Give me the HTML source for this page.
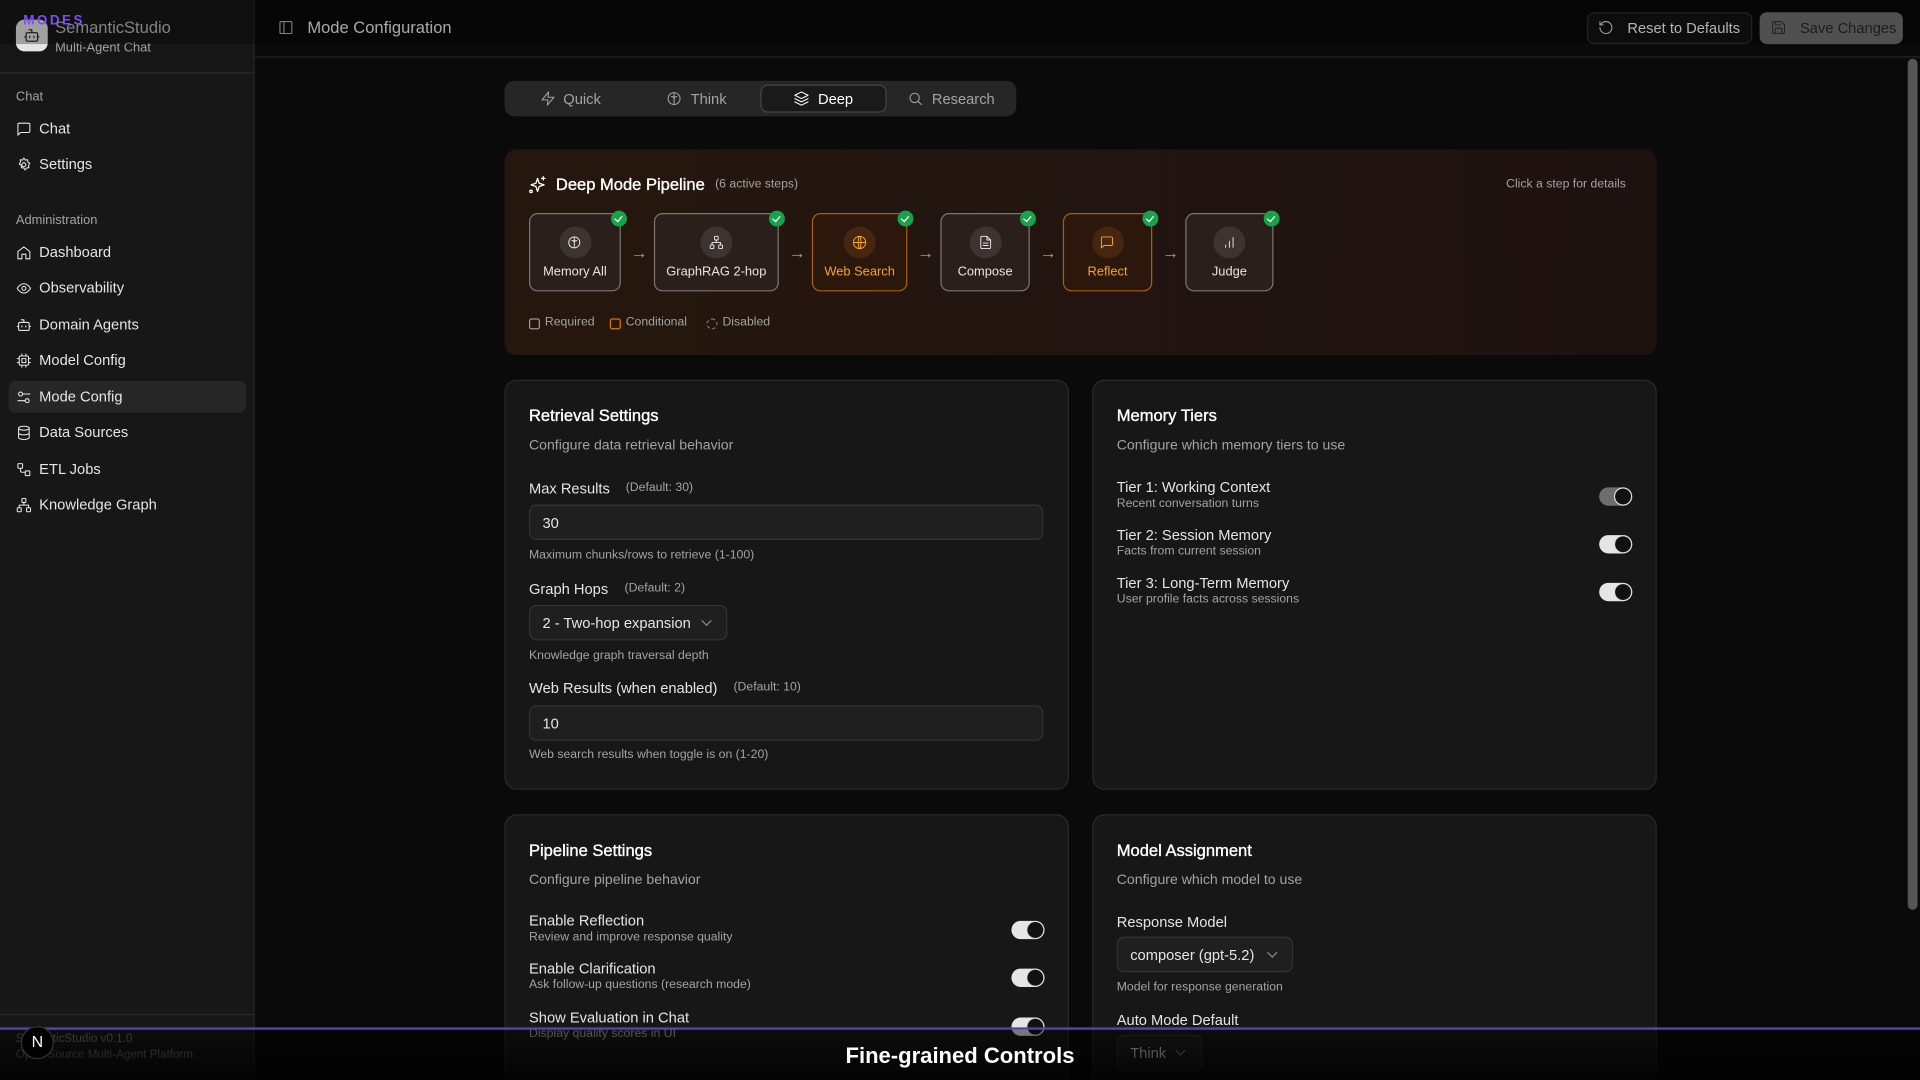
<!DOCTYPE html>
<html><head><meta charset="utf-8">
<style>
*{box-sizing:border-box;margin:0;padding:0}
html,body{width:1920px;height:1080px;overflow:hidden;background:#0a0a0a}
body{font-family:"Liberation Sans",Arial,sans-serif;color:#e5e5e5}
#w{position:absolute;left:0;top:0;width:1568px;height:882px;transform:scale(1.22449);transform-origin:0 0;background:#0a0a0a;overflow:hidden}
.a{position:absolute;white-space:nowrap;line-height:16px}
.box{position:absolute}
svg{position:absolute;fill:none;stroke:currentColor;stroke-width:1.6;stroke-linecap:round;stroke-linejoin:round}
.nav{font-size:12px;color:#e5e5e5}
.muted{color:#a3a3a3}
.card{position:absolute;background:#171717;border:1px solid #2a2a2a;border-radius:10px}
.inp{position:absolute;background:#1f1f1f;border:1px solid #333;border-radius:6px}
.tg{position:absolute;width:27px;height:15px;border-radius:8px;background:#e5e5e5}
.tg::after{content:"";position:absolute;right:1px;top:1px;width:13px;height:13px;border-radius:50%;background:#111;box-shadow:0 0 0 1px #ddd}
.step{position:absolute;top:174px;height:64px;border:1.5px solid #7a7574;border-radius:7px;background:#2b1f1c}
.step.o{border-color:#a85f0c;background:#2b170b}
.step .ic{position:absolute;left:50%;top:10px;width:26px;height:26px;margin-left:-13px;border-radius:50%;background:#3d3331}
.step.o .ic{background:#46260f}
.step .lb{position:absolute;left:0;right:0;top:39px;text-align:center;font-size:10.5px;color:#e5e5e5;line-height:16px}
.step.o .lb{color:#f5a524}
.chk{position:absolute;right:-6px;top:-3px;width:13px;height:13px;border-radius:50%;background:#16a34a}
.chk::after{content:"";position:absolute;left:4px;top:2.5px;width:3px;height:5px;border:solid #fff;border-width:0 1.3px 1.3px 0;transform:rotate(40deg)}
.arr{position:absolute;top:198px;font-size:14px;color:#9a9a9a}
.sel{position:absolute;width:6px;height:6px;border:solid #888;border-width:0 1px 1px 0;transform:rotate(45deg)}
</style></head><body><div id="w">

<!-- sidebar -->
<div class="box" style="left:0;top:0;width:208px;height:882px;background:#171717;border-right:1px solid #262626"></div>
<div class="box" style="left:0;top:59px;width:208px;height:1px;background:#2a2a2a"></div>
<div class="box" style="left:13px;top:16px;width:26px;height:26px;border-radius:7px;background:#e5e5e5"></div>
<svg style="left:19px;top:22px;color:#222" width="14" height="14" viewBox="0 0 24 24"><path d="M12 8V4H8"/><rect x="4" y="8" width="16" height="12" rx="2"/><path d="M2 14h2M20 14h2M15 13v2M9 13v2"/></svg>
<div class="a" style="left:45px;top:15px;font-size:13.5px;color:#bdbdbd">SemanticStudio</div>
<div class="a" style="left:45px;top:31px;font-size:10.5px;color:#a3a3a3">Multi-Agent Chat</div>

<div class="a muted" style="left:13px;top:71px;font-size:10.5px">Chat</div>
<svg style="left:13px;top:99px" width="13" height="13" viewBox="0 0 24 24"><path d="M21 15a2 2 0 0 1-2 2H7l-4 4V5a2 2 0 0 1 2-2h14a2 2 0 0 1 2 2z"/></svg>
<div class="a nav" style="left:32px;top:97px">Chat</div>
<svg style="left:13px;top:128px" width="13" height="13" viewBox="0 0 24 24"><circle cx="12" cy="12" r="3"/><path d="M12 2l2 3 3.5-.5.5 3.5 3 2-2 3 .5 3.5-3.5.5-2 3-2-3-3.5-.5-.5-3.5-3-2 2-3L6.5 4.5 10 5z"/></svg>
<div class="a nav" style="left:32px;top:126px">Settings</div>

<div class="a muted" style="left:13px;top:172px;font-size:10.5px">Administration</div>
<div class="box" style="left:7px;top:311px;width:194px;height:26px;border-radius:6px;background:#262626"></div>
<svg style="left:13px;top:200px" width="13" height="13" viewBox="0 0 24 24"><path d="M3 10l9-7 9 7v11h-6v-7H9v7H3z"/></svg>
<div class="a nav" style="left:32px;top:198px">Dashboard</div>
<svg style="left:13px;top:229px" width="13" height="13" viewBox="0 0 24 24"><path d="M2 12s4-7 10-7 10 7 10 7-4 7-10 7S2 12 2 12z"/><circle cx="12" cy="12" r="3"/></svg>
<div class="a nav" style="left:32px;top:227px">Observability</div>
<svg style="left:13px;top:259px" width="13" height="13" viewBox="0 0 24 24"><path d="M12 8V4H8"/><rect x="4" y="8" width="16" height="12" rx="2"/><path d="M2 14h2M20 14h2M15 13v2M9 13v2"/></svg>
<div class="a nav" style="left:32px;top:257px">Domain Agents</div>
<svg style="left:13px;top:288px" width="13" height="13" viewBox="0 0 24 24"><rect x="5" y="5" width="14" height="14" rx="2"/><rect x="9" y="9" width="6" height="6"/><path d="M9 2v3M15 2v3M9 19v3M15 19v3M2 9h3M2 15h3M19 9h3M19 15h3"/></svg>
<div class="a nav" style="left:32px;top:286px">Model Config</div>
<svg style="left:13px;top:318px" width="13" height="13" viewBox="0 0 24 24"><circle cx="7" cy="7" r="3"/><path d="M10 7h11M3 17h11"/><circle cx="17" cy="17" r="3"/></svg>
<div class="a nav" style="left:32px;top:316px">Mode Config</div>
<svg style="left:13px;top:347px" width="13" height="13" viewBox="0 0 24 24"><ellipse cx="12" cy="5" rx="8" ry="3"/><path d="M4 5v14c0 1.7 3.6 3 8 3s8-1.3 8-3V5M4 12c0 1.7 3.6 3 8 3s8-1.3 8-3"/></svg>
<div class="a nav" style="left:32px;top:345px">Data Sources</div>
<svg style="left:13px;top:377px" width="13" height="13" viewBox="0 0 24 24"><rect x="3" y="3" width="7" height="7" rx="1"/><rect x="14" y="14" width="7" height="7" rx="1"/><path d="M7 10v4a2 2 0 0 0 2 2h5"/></svg>
<div class="a nav" style="left:32px;top:375px">ETL Jobs</div>
<svg style="left:13px;top:406px" width="13" height="13" viewBox="0 0 24 24"><rect x="9" y="2" width="6" height="6" rx="1"/><rect x="2" y="16" width="6" height="6" rx="1"/><rect x="16" y="16" width="6" height="6" rx="1"/><path d="M12 8v4M5 16v-4h14v4"/></svg>
<div class="a nav" style="left:32px;top:404px">Knowledge Graph</div>

<div class="box" style="left:0;top:828px;width:208px;height:1px;background:#2a2a2a"></div>
<div class="a" style="left:13px;top:841px;font-size:9.5px;color:#737373">SemanticStudio v0.1.0</div>
<div class="a" style="left:13px;top:854px;font-size:9.5px;color:#737373">Open Source Multi-Agent Platform</div>

<!-- header -->
<div class="box" style="left:208px;top:46px;width:1360px;height:1px;background:#262626"></div>
<svg style="left:227px;top:16px;color:#bbb" width="13" height="13" viewBox="0 0 24 24"><rect x="3" y="3" width="18" height="18" rx="2"/><path d="M9 3v18"/></svg>
<div class="a" style="left:251px;top:15px;font-size:13.5px;color:#f0f0f0">Mode Configuration</div>
<div class="box" style="left:1296px;top:10px;width:135px;height:26px;border:1px solid #333;border-radius:6px;background:#141414"></div>
<svg style="left:1305px;top:16px" width="13" height="13" viewBox="0 0 24 24"><path d="M3 12a9 9 0 1 0 3-6.7L3 8"/><path d="M3 3v5h5"/></svg>
<div class="a" style="left:1329px;top:15px;font-size:12px;color:#fff">Reset to Defaults</div>
<div class="box" style="left:1437px;top:10px;width:117px;height:26px;border-radius:6px;background:#737373"></div>
<svg style="left:1446px;top:16px;color:#333" width="13" height="13" viewBox="0 0 24 24"><path d="M19 21H5a2 2 0 0 1-2-2V5a2 2 0 0 1 2-2h11l5 5v11a2 2 0 0 1-2 2z"/><path d="M17 21v-8H7v8M7 3v5h8"/></svg>
<div class="a" style="left:1470px;top:15px;font-size:12px;color:#2a2a2a">Save Changes</div>

<!-- top overlay -->
<div class="box" style="left:0;top:0;width:1568px;height:36px;background:rgba(0,0,0,0.3)"></div>
<div class="a" style="left:19px;top:9px;font-size:11px;font-weight:bold;letter-spacing:2px;color:#7c4dff">MODES</div>

<!-- scrollbar -->
<div class="box" style="left:1558px;top:48px;width:8px;height:695px;border-radius:4px;background:#555"></div>

<!-- tabs -->
<div class="box" style="left:412px;top:66px;width:418px;height:29px;border-radius:8px;background:#262626"></div>
<div class="box" style="left:621px;top:69px;width:103px;height:23px;border-radius:6px;background:#1a1a1a;border:1px solid #444"></div>
<svg style="left:441px;top:74px;color:#a3a3a3" width="13" height="13" viewBox="0 0 24 24"><path d="M13 2L3 14h9l-1 8 10-12h-9z"/></svg>
<div class="a muted" style="left:460px;top:73px;font-size:12px">Quick</div>
<svg style="left:544px;top:74px;color:#a3a3a3" width="13" height="13" viewBox="0 0 24 24"><circle cx="12" cy="12" r="9"/><path d="M12 4v16M8 9c2 0 4 1 4 3M16 9c-2 0-4 1-4 3"/></svg>
<div class="a muted" style="left:564px;top:73px;font-size:12px">Think</div>
<svg style="left:648px;top:74px;color:#fff" width="13" height="13" viewBox="0 0 24 24"><path d="M12 2l10 5-10 5L2 7z"/><path d="M2 12l10 5 10-5M2 17l10 5 10-5"/></svg>
<div class="a" style="left:668px;top:73px;font-size:12px;color:#fff">Deep</div>
<svg style="left:741px;top:74px;color:#a3a3a3" width="13" height="13" viewBox="0 0 24 24"><circle cx="11" cy="11" r="7"/><path d="M21 21l-5-5"/></svg>
<div class="a muted" style="left:761px;top:73px;font-size:12px">Research</div>

<!-- pipeline -->
<div class="box" style="left:412px;top:122px;width:941px;height:168px;border-radius:10px;background:linear-gradient(90deg,#26170e,#1e1211)"></div>
<svg style="left:431px;top:143px;color:#fff" width="16" height="16" viewBox="0 0 24 24"><path d="M12 4l2 6 6 2-6 2-2 6-2-6-6-2 6-2z"/><path d="M19 2v4M17 4h4"/><circle cx="4" cy="20" r="1.5"/></svg>
<div class="a" style="left:454px;top:143px;font-size:13.5px;color:#fff;-webkit-text-stroke:0.3px #fff">Deep Mode Pipeline</div>
<div class="a muted" style="left:584px;top:143px;font-size:10px">(6 active steps)</div>
<div class="a muted" style="left:1230px;top:143px;font-size:10px">Click a step for details</div>

<div class="step" style="left:432px;width:75px"><div class="ic"></div><div class="lb">Memory All</div><div class="chk"></div></div>
<div class="arr" style="left:515px">→</div>
<div class="step" style="left:534px;width:102px"><div class="ic"></div><div class="lb">GraphRAG 2-hop</div><div class="chk"></div></div>
<div class="arr" style="left:644px">→</div>
<div class="step o" style="left:663px;width:78px"><div class="ic"></div><div class="lb">Web Search</div><div class="chk"></div></div>
<div class="arr" style="left:749px">→</div>
<div class="step" style="left:768px;width:73px"><div class="ic"></div><div class="lb">Compose</div><div class="chk"></div></div>
<div class="arr" style="left:849px">→</div>
<div class="step o" style="left:868px;width:73px"><div class="ic"></div><div class="lb">Reflect</div><div class="chk"></div></div>
<div class="arr" style="left:949px">→</div>
<div class="step" style="left:968px;width:72px"><div class="ic"></div><div class="lb">Judge</div><div class="chk"></div></div>
<svg style="left:463px;top:192px;color:#eee;stroke-width:1.5" width="12" height="12" viewBox="0 0 24 24"><circle cx="12" cy="12" r="9"/><path d="M12 4v16M8 9c2 0 4 1 4 3M16 9c-2 0-4 1-4 3"/></svg>
<svg style="left:579px;top:192px;color:#eee;stroke-width:1.5" width="12" height="12" viewBox="0 0 24 24"><rect x="9" y="2" width="6" height="6" rx="1"/><rect x="2" y="16" width="6" height="6" rx="1"/><rect x="16" y="16" width="6" height="6" rx="1"/><path d="M12 8v4M5 16v-4h14v4"/></svg>
<svg style="left:696px;top:192px;color:#f5a524;stroke-width:1.6" width="12" height="12" viewBox="0 0 24 24"><circle cx="12" cy="12" r="10"/><path d="M2 12h20M12 2c3 3 3 17 0 20M12 2c-3 3-3 17 0 20"/></svg>
<svg style="left:799px;top:192px;color:#eee;stroke-width:1.5" width="12" height="12" viewBox="0 0 24 24"><path d="M14 2H6a2 2 0 0 0-2 2v16a2 2 0 0 0 2 2h12a2 2 0 0 0 2-2V8z"/><path d="M14 2v6h6M8 13h8M8 17h8"/></svg>
<svg style="left:898px;top:192px;color:#f5a524;stroke-width:1.6" width="12" height="12" viewBox="0 0 24 24"><path d="M21 15a2 2 0 0 1-2 2H7l-4 4V5a2 2 0 0 1 2-2h14a2 2 0 0 1 2 2z"/></svg>
<svg style="left:998px;top:192px;color:#eee;stroke-width:1.5" width="12" height="12" viewBox="0 0 24 24"><path d="M6 20v-4M12 20V10M18 20V4"/></svg>

<div class="box" style="left:432px;top:260px;width:9px;height:9px;border:1.2px solid #999;border-radius:2px"></div>
<div class="a muted" style="left:445px;top:256px;font-size:10px">Required</div>
<div class="box" style="left:498px;top:260px;width:9px;height:9px;border:1.2px solid #d97706;border-radius:2px"></div>
<div class="a muted" style="left:511px;top:256px;font-size:10px">Conditional</div>
<div class="box" style="left:577px;top:260px;width:9px;height:9px;border:1.2px dashed #777;border-radius:50%"></div>
<div class="a muted" style="left:590px;top:256px;font-size:10px">Disabled</div>

<!-- Retrieval -->
<div class="card" style="left:412px;top:310px;width:461px;height:335px"></div>
<div class="a" style="left:432px;top:332px;font-size:13.5px;color:#fff;-webkit-text-stroke:0.3px #fff">Retrieval Settings</div>
<div class="a muted" style="left:432px;top:356px;font-size:11.5px">Configure data retrieval behavior</div>
<div class="a" style="left:432px;top:391px;font-size:12px">Max Results</div>
<div class="a muted" style="left:511px;top:391px;font-size:10px">(Default: 30)</div>
<div class="inp" style="left:432px;top:412px;width:420px;height:29px"></div>
<div class="a" style="left:443px;top:419px;font-size:12px">30</div>
<div class="a muted" style="left:432px;top:446px;font-size:10px">Maximum chunks/rows to retrieve (1-100)</div>
<div class="a" style="left:432px;top:473px;font-size:12px">Graph Hops</div>
<div class="a muted" style="left:510px;top:473px;font-size:10px">(Default: 2)</div>
<div class="inp" style="left:432px;top:494px;width:162px;height:29px"></div>
<div class="a" style="left:443px;top:501px;font-size:12px">2 - Two-hop expansion</div>
<div class="sel" style="left:574px;top:504px"></div>
<div class="a muted" style="left:432px;top:528px;font-size:10px">Knowledge graph traversal depth</div>
<div class="a" style="left:432px;top:554px;font-size:12px">Web Results (when enabled)</div>
<div class="a muted" style="left:599px;top:554px;font-size:10px">(Default: 10)</div>
<div class="inp" style="left:432px;top:576px;width:420px;height:29px"></div>
<div class="a" style="left:443px;top:583px;font-size:12px">10</div>
<div class="a muted" style="left:432px;top:609px;font-size:10px">Web search results when toggle is on (1-20)</div>

<!-- Memory tiers -->
<div class="card" style="left:892px;top:310px;width:461px;height:335px"></div>
<div class="a" style="left:912px;top:332px;font-size:13.5px;color:#fff;-webkit-text-stroke:0.3px #fff">Memory Tiers</div>
<div class="a muted" style="left:912px;top:356px;font-size:11.5px">Configure which memory tiers to use</div>
<div class="a" style="left:912px;top:390px;font-size:12px">Tier 1: Working Context</div>
<div class="a muted" style="left:912px;top:404px;font-size:10px">Recent conversation turns</div>
<div class="tg" style="left:1306px;top:398px;background:#6e6e6e"></div>
<div class="a" style="left:912px;top:429px;font-size:12px">Tier 2: Session Memory</div>
<div class="a muted" style="left:912px;top:443px;font-size:10px">Facts from current session</div>
<div class="tg" style="left:1306px;top:437px"></div>
<div class="a" style="left:912px;top:468px;font-size:12px">Tier 3: Long-Term Memory</div>
<div class="a muted" style="left:912px;top:482px;font-size:10px">User profile facts across sessions</div>
<div class="tg" style="left:1306px;top:476px"></div>

<!-- Pipeline settings -->
<div class="card" style="left:412px;top:665px;width:461px;height:260px"></div>
<div class="a" style="left:432px;top:687px;font-size:13.5px;color:#fff;-webkit-text-stroke:0.3px #fff">Pipeline Settings</div>
<div class="a muted" style="left:432px;top:711px;font-size:11.5px">Configure pipeline behavior</div>
<div class="a" style="left:432px;top:744px;font-size:12px">Enable Reflection</div>
<div class="a muted" style="left:432px;top:758px;font-size:10px">Review and improve response quality</div>
<div class="tg" style="left:826px;top:752px"></div>
<div class="a" style="left:432px;top:783px;font-size:12px">Enable Clarification</div>
<div class="a muted" style="left:432px;top:797px;font-size:10px">Ask follow-up questions (research mode)</div>
<div class="tg" style="left:826px;top:791px"></div>
<div class="a" style="left:432px;top:823px;font-size:12px">Show Evaluation in Chat</div>
<div class="a muted" style="left:432px;top:837px;font-size:10px">Display quality scores in UI</div>
<div class="tg" style="left:826px;top:831px"></div>

<!-- Model assignment -->
<div class="card" style="left:892px;top:665px;width:461px;height:260px"></div>
<div class="a" style="left:912px;top:687px;font-size:13.5px;color:#fff;-webkit-text-stroke:0.3px #fff">Model Assignment</div>
<div class="a muted" style="left:912px;top:711px;font-size:11.5px">Configure which model to use</div>
<div class="a" style="left:912px;top:745px;font-size:12px">Response Model</div>
<div class="inp" style="left:912px;top:765px;width:144px;height:29px"></div>
<div class="a" style="left:923px;top:772px;font-size:12px">composer (gpt-5.2)</div>
<div class="sel" style="left:1036px;top:775px"></div>
<div class="a muted" style="left:912px;top:799px;font-size:10px">Model for response generation</div>
<div class="a" style="left:912px;top:825px;font-size:12px">Auto Mode Default</div>
<div class="inp" style="left:912px;top:845px;width:70px;height:30px"></div>
<div class="a" style="left:923px;top:852px;font-size:12px">Think</div>
<div class="sel" style="left:961px;top:855px"></div>

<!-- bottom overlay -->
<div class="box" style="left:0;top:841px;width:1568px;height:41px;background:linear-gradient(180deg,rgba(0,0,0,0.45),rgba(0,0,0,0.85))"></div>
<div class="box" style="left:0;top:839px;width:1568px;height:2px;background:#5b3fa8"></div>
<div class="box" style="left:17px;top:838px;width:27px;height:27px;border-radius:50%;background:#000;border:1px solid #333"></div>
<div class="a" style="left:17px;top:843px;width:27px;text-align:center;font-size:13px;color:#fff">N</div>
<div class="a" style="left:0;top:852px;width:1568px;text-align:center;font-size:18px;line-height:20px;font-weight:bold;color:#fff">Fine-grained Controls</div>

</div></body></html>
